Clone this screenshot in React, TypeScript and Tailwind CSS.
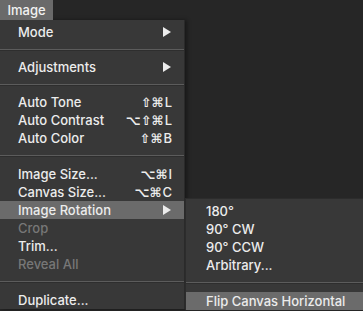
import React from "react";

type Item =
  | { kind: "item"; label: string; shortcut?: string; arrow?: boolean; disabled?: boolean; active?: boolean }
  | { kind: "sep"; h: string };

const mainItems: Item[] = [
  { kind: "item", label: "Mode", arrow: true },
  { kind: "sep", h: "h-[17px]" },
  { kind: "item", label: "Adjustments", arrow: true },
  { kind: "sep", h: "h-[17px]" },
  { kind: "item", label: "Auto Tone", shortcut: "⇧⌘L" },
  { kind: "item", label: "Auto Contrast", shortcut: "⌥⇧⌘L" },
  { kind: "item", label: "Auto Color", shortcut: "⇧⌘B" },
  { kind: "sep", h: "h-[18px]" },
  { kind: "item", label: "Image Size...", shortcut: "⌥⌘I" },
  { kind: "item", label: "Canvas Size...", shortcut: "⌥⌘C" },
  { kind: "item", label: "Image Rotation", arrow: true, active: true },
  { kind: "item", label: "Crop", disabled: true },
  { kind: "item", label: "Trim..." },
  { kind: "item", label: "Reveal All", disabled: true },
  { kind: "sep", h: "h-[18px]" },
  { kind: "item", label: "Duplicate..." },
];

const subItems: Item[] = [
  { kind: "item", label: "180°" },
  { kind: "item", label: "90° CW" },
  { kind: "item", label: "90° CCW" },
  { kind: "item", label: "Arbitrary..." },
  { kind: "sep", h: "h-[18px]" },
  { kind: "item", label: "Flip Canvas Horizontal", active: true },
];

function Sep({ h }: { h: string }) {
  return (
    <div className={`${h} flex items-center`}>
      <div className="w-full h-[2px] bg-[#5c5c5c] border-b border-[#2e2e2e]" />
    </div>
  );
}

function Row({ item, pl }: { item: Extract<Item, { kind: "item" }>; pl: string }) {
  const sc = item.shortcut;
  return (
    <div
      className={`h-[18px] flex items-center ${pl} pr-[12px] ${item.active ? "bg-[#6b6b6b]" : ""} ${
        item.disabled ? "text-[#777777]" : "text-[#ececec]"
      }`}
    >
      <span className="flex-1 whitespace-nowrap">{item.label}</span>
      {sc && (
        <span className="whitespace-nowrap flex items-center">
          <span className="[font-family:'DejaVu_Sans',sans-serif] text-[13px] font-bold">{sc.slice(0, -1)}</span>
          <span className="ml-[1px]">{sc.slice(-1)}</span>
        </span>
      )}
      {item.arrow && (
        <svg width="8" height="10" viewBox="0 0 8 10" className="mr-[1px]">
          <path d="M0 0 L8 5 L0 10 Z" fill="#ececec" />
        </svg>
      )}
    </div>
  );
}

export default function App() {
  return (
    <div className="w-[363px] h-[311px] overflow-hidden bg-[#262626] text-[13px] font-medium [font-family:Inter,'Liberation_Sans',sans-serif] leading-none relative">
      <div className="h-[20px] flex">
        <div className="w-[53px] h-[20px] bg-[#6a6a6a] text-[#f2f2f2] flex items-center justify-center text-[13px]">
          Image
        </div>
      </div>
      <div className="w-[185px] bg-[#383838] pt-[3px] border-r border-[#2a2a2a] shadow-[2px_0_4px_rgba(0,0,0,0.4)]">
        {mainItems.map((it, i) =>
          it.kind === "sep" ? <Sep key={i} h={it.h} /> : <Row key={i} item={it} pl="pl-[18px]" />
        )}
      </div>
      <div className="absolute left-[185px] top-[198px] w-[200px] bg-[#383838] pt-[3px] border-l border-t border-[#2c2c2c]">
        {subItems.map((it, i) =>
          it.kind === "sep" ? <Sep key={i} h={it.h} /> : <Row key={i} item={it} pl="pl-[20px]" />
        )}
      </div>
    </div>
  );
}
